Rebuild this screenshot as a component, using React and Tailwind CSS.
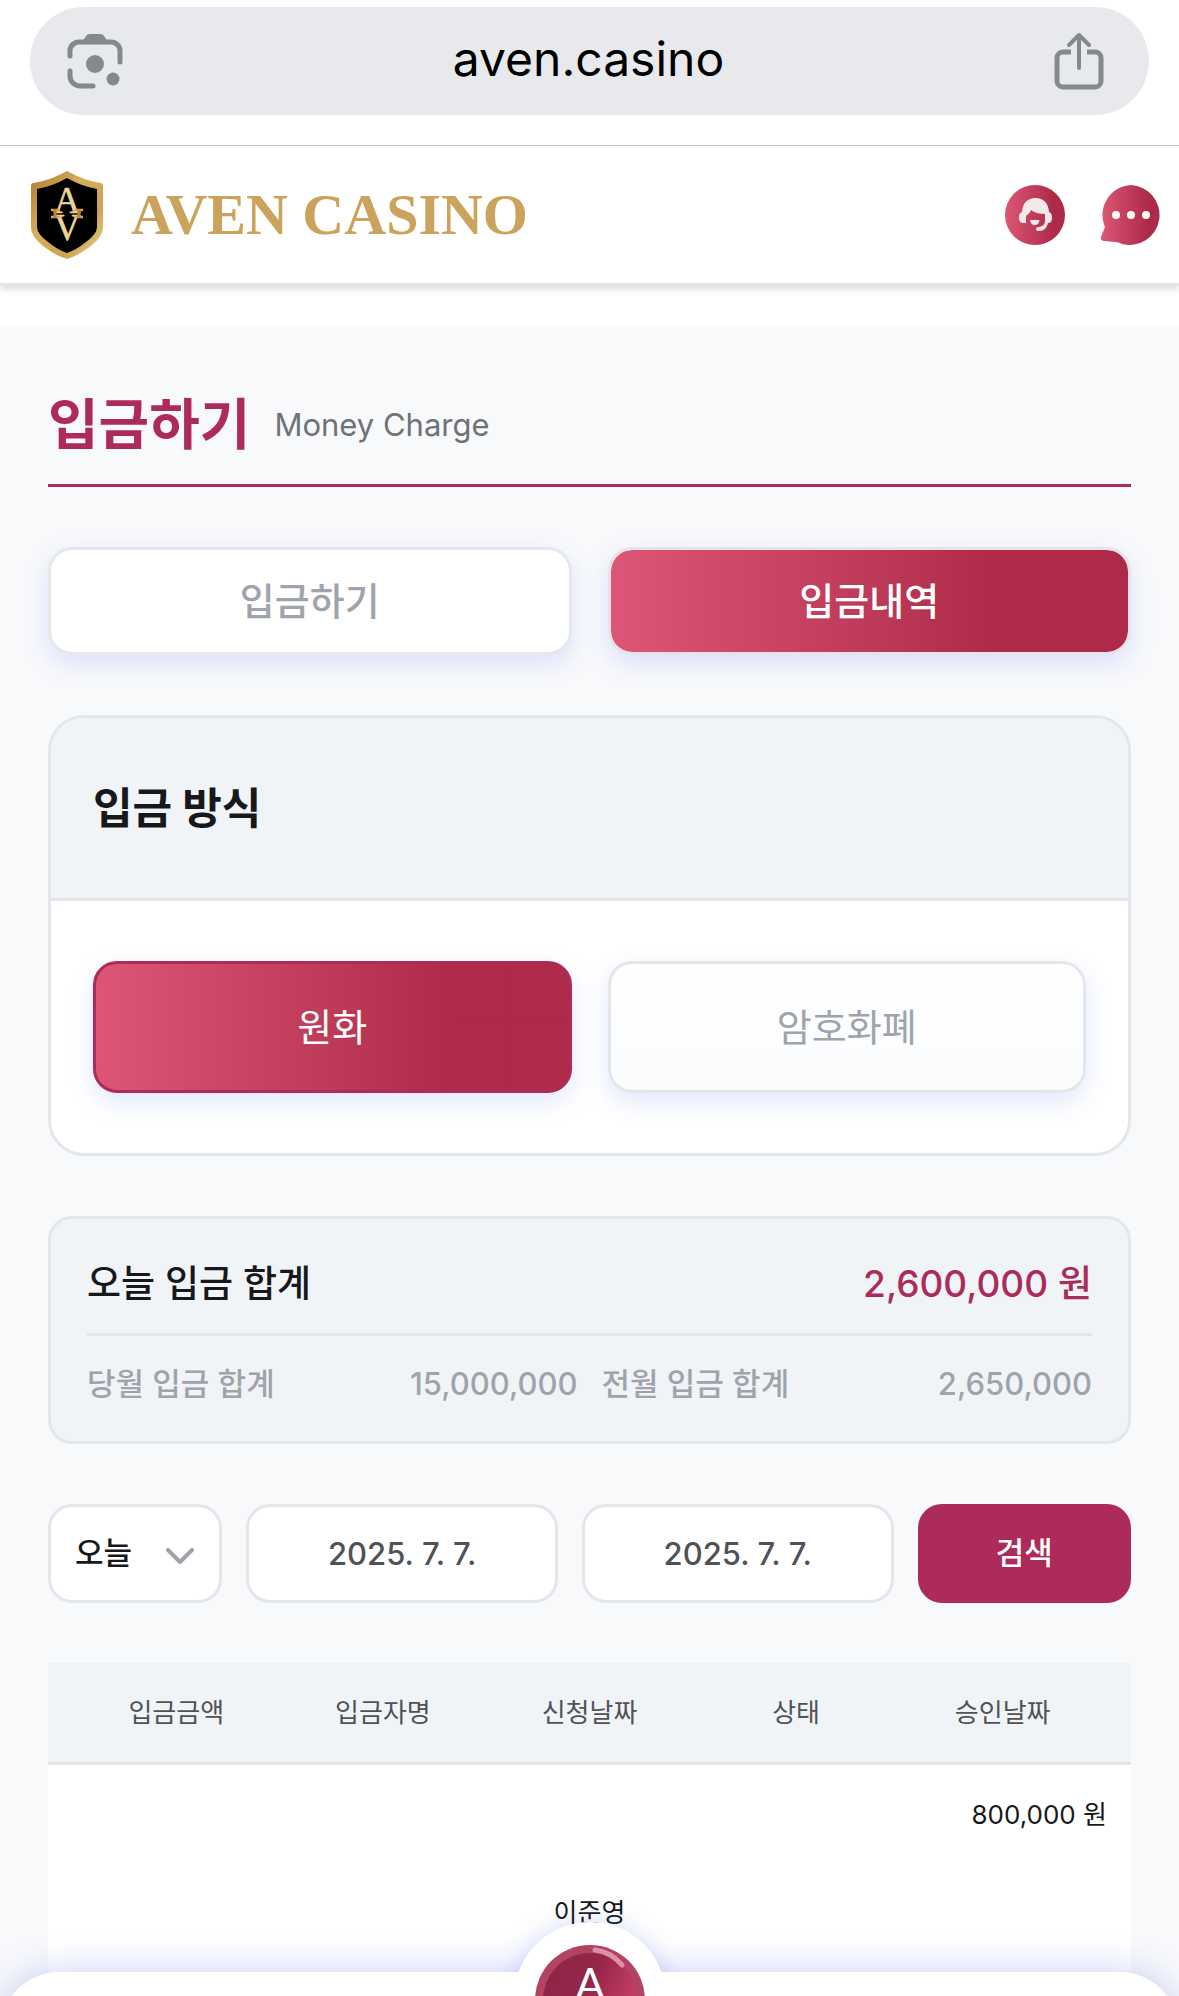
import { useState } from "react";

const SearchLensIcon = () => (
  <svg viewBox="0 0 56 56" className="w-14 h-14" fill="none" stroke="#85888c" strokeWidth="5" strokeLinecap="round">
    <path d="M3 23v-5a9 9 0 0 1 9-9h32a9 9 0 0 1 9 9v11" />
    <path d="M3 38v5a10 10 0 0 0 10 10h13" />
    <path d="M15 9l4-6q1-2 4-2h10q3 0 4 2l4 6z" fill="#85888c" stroke="none" />
    <circle cx="28" cy="31" r="9" fill="#85888c" stroke="none" />
    <circle cx="46" cy="46" r="6.5" fill="#85888c" stroke="none" />
  </svg>
);

const ShareIcon = () => (
  <svg viewBox="0 0 50 58" className="w-[50px] h-[58px]" fill="none" stroke="#85888c" strokeWidth="5" strokeLinecap="round" strokeLinejoin="round">
    <path d="M17 20H9a6 6 0 0 0-6 6v23a6 6 0 0 0 6 6h32a6 6 0 0 0 6-6V26a6 6 0 0 0-6-6h-8" strokeLinecap="butt" />
    <path d="M25 36V4M15 13L25 3l10 10" strokeWidth="4" />
  </svg>
);

const ShieldLogo = () => (
  <svg viewBox="0 0 74 90" className="w-[74px] h-[90px]">
    <defs>
      <linearGradient id="gold" x1="0" y1="0" x2="1" y2="1">
        <stop offset="0" stopColor="#b07a2c" />
        <stop offset="0.4" stopColor="#d5ae5e" />
        <stop offset="0.7" stopColor="#cda352" />
        <stop offset="1" stopColor="#ead78e" />
      </linearGradient>
    </defs>
    <path d="M37 1Q53 10 70 13q3 0 3 3v42Q73 66 61 76 48 86 37 89 26 86 13 76 1 66 1 58V16q0-3 3-3Q21 10 37 1z" fill="url(#gold)" />
    <path d="M37 8Q51 16 67 19v38q0 7-11 15-10 8-19 11-9-3-19-11Q7 64 7 57V19Q23 16 37 8z" fill="#000" />
    <g fill="#ead49a" stroke="#ead49a" strokeWidth="0.6" fontFamily="Liberation Serif, serif" fontSize="37" textAnchor="middle">
      <text x="37" y="43">A</text>
      <text x="37" y="70">V</text>
    </g>
    <path d="M21 40h9M21 47h9M44 40h9M44 47h9" stroke="#d9a95c" strokeWidth="2.5" />
    <path d="M25 39v9M49 39v9" stroke="#b9823c" strokeWidth="3" />
  </svg>
);

const SupportIcon = () => (
  <svg viewBox="0 0 60 60" className="w-15 h-15">
    <defs>
      <linearGradient id="rose" x1="0" x2="1">
        <stop offset="0" stopColor="#dd5676" />
        <stop offset="0.8" stopColor="#ad2b49" />
        <stop offset="1" stopColor="#ad2b49" />
      </linearGradient>
    </defs>
    <circle cx="30" cy="30" r="30" fill="url(#rose)" />
    <g fill="#f5e8ea">
      <path d="M17 28C17 18 23 13 30.5 13S44 18 44 28h-4v1q-9 0-14-4-2 5-6 6v-3z" />
      <path d="M21 27v11h-3q-4 0-4-5.500t4-5.500z" />
      <path d="M40 27h3q4 0 4 5.500T43 38q-2 8-9 8-3 0-3-2t3-2q6-1 6-6z" />
      <path d="M25 35h9.500q-.5 5-4.700 5T25 35z" />
    </g>
  </svg>
);

const ChatIcon = () => (
  <svg viewBox="0 0 60 60" className="w-15 h-15">
    <path d="M30 0a30 30 0 1 1-9 59q-3-2-7-2l-11-1q-4 0-3-4l4-10A30 30 0 0 1 30 0z" fill="url(#rose)" />
    <circle cx="15" cy="30" r="4" fill="#fff" />
    <circle cx="30" cy="30" r="4" fill="#fff" />
    <circle cx="45" cy="30" r="4" fill="#fff" />
  </svg>
);

const BrowserBar = () => (
  <div className="pt-[7px] pb-[30px] px-[30px] bg-white border-b border-[#c6c7ca]">
    <div className="h-[108px] rounded-full bg-[#e8e9ec] flex items-center justify-between pl-[37px] pr-[45px]">
      <button aria-label="이미지 검색"><SearchLensIcon /></button>
      <button className="text-[48px] leading-none text-black pb-1">aven.casino</button>
      <button aria-label="공유"><ShareIcon /></button>
    </div>
  </div>
);

const Header = () => (
  <header className="relative h-[140px] bg-white border-b-3 border-[#e3e4e7] shadow-[0_4px_6px_rgba(0,0,0,0.12)] flex items-center justify-between pl-[30px] pr-[18px]">
    <a href="#" className="flex items-center gap-[27px]">
      <ShieldLogo />
      <span className="font-['Liberation_Serif',serif] font-bold text-[58px] leading-none text-[#cca35c]">AVEN CASINO</span>
    </a>
    <div className="flex items-center gap-9">
      <button aria-label="고객센터"><SupportIcon /></button>
      <button aria-label="채팅"><ChatIcon /></button>
    </div>
  </header>
);

const roseGradient = "bg-linear-to-r from-[#dd5676] via-[#ad2b49] via-75% to-[#ad2b49] text-white";
const softShadow = "shadow-[0_9px_24px_rgba(75,110,240,0.16)]";

const Tabs = () => (
  <div className="grid grid-cols-2 gap-9">
    <button className={`h-[108px] rounded-3xl border-3 border-[#e4e8ec] bg-white text-[38px] font-medium text-[#9fa3ac] ${softShadow}`}>입금하기</button>
    <button className={`h-[108px] rounded-3xl border-3 border-[#e9e2ea] bg-clip-padding text-[38px] font-medium ${roseGradient} ${softShadow}`}>입금내역</button>
  </div>
);

const MethodCard = () => (
  <section className="rounded-[36px] border-3 border-[#e3e7ec] bg-white overflow-hidden">
    <h2 className="h-[183px] px-[42px] flex items-center bg-[#f1f4f7] border-b-3 border-[#e3e7ec] text-[43px] font-bold text-[#17181b]">입금 방식</h2>
    <div className="grid grid-cols-2 gap-9 px-[42px] py-[60px]">
      <button className={`h-[132px] rounded-3xl border-3 border-[#ac2b5a] bg-origin-border text-[38px] ${roseGradient} ${softShadow}`}>원화</button>
      <button className={`h-[132px] rounded-3xl border-3 border-[#e3e7ec] bg-linear-to-b from-white to-[#fafcfe] text-[38px] text-[#9fa3ac] ${softShadow}`}>암호화폐</button>
    </div>
  </section>
);

const Summary = () => (
  <section className="h-[228px] rounded-3xl border-3 border-[#e3e7ec] bg-[#f1f4f7] px-9">
    <div className="h-[117px] pt-4 flex items-center justify-between border-b-3 border-[#e3e7ec] text-[37px] font-medium">
      <span className="text-[#17181b]">오늘 입금 합계</span>
      <strong className="font-medium text-[#ac2b5a]">2,600,000 원</strong>
    </div>
    <div className="h-24 grid grid-cols-2 gap-6 text-[31px] font-medium text-[#9fa3ac]">
      <div className="flex items-center justify-between"><span>당월 입금 합계</span><span>15,000,000</span></div>
      <div className="flex items-center justify-between"><span>전월 입금 합계</span><span>2,650,000</span></div>
    </div>
  </section>
);

const Filters = () => {
  const [from, setFrom] = useState("2025. 7. 7.");
  const [to, setTo] = useState("2025. 7. 7.");
  const box = "w-full h-[99px] rounded-3xl border-3 border-[#e3e7ec] bg-white text-[31px] font-medium";

  return (
    <form className="grid grid-cols-[174fr_311fr_311fr_213fr] gap-6" onSubmit={(e) => e.preventDefault()}>
      <div className="relative">
        <select aria-label="기간" className={`${box} appearance-none pl-6 text-[#17181b]`}>
          <option>오늘</option>
        </select>
        <svg viewBox="0 0 28 16" className="absolute right-7 top-[44px] w-7 h-4 pointer-events-none" fill="none" stroke="#9fa3b0" strokeWidth="4" strokeLinecap="round" strokeLinejoin="round">
          <path d="M2 2l12 12L26 2" />
        </svg>
      </div>
      <input aria-label="시작일" className={`${box} text-center text-[#505256]`} value={from} onChange={(e) => setFrom(e.target.value)} />
      <input aria-label="종료일" className={`${box} text-center text-[#505256]`} value={to} onChange={(e) => setTo(e.target.value)} />
      <button className="h-[99px] rounded-3xl bg-[#ac2b5a] text-[31px] font-medium text-white">검색</button>
    </form>
  );
};

const columns = ["입금금액", "입금자명", "신청날짜", "상태", "승인날짜"];

const History = () => (
  <table className="block w-full bg-white text-[26px] text-[#17181b]">
    <thead className="block bg-[#f1f4f7] border-b-3 border-[#e3e7ec] px-[25px]">
      <tr className="grid grid-cols-5 h-[99px] items-center">
        {columns.map((name) => (
          <th key={name} className="font-normal text-[#505256]">{name}</th>
        ))}
      </tr>
    </thead>
    <tbody className="block px-6">
      <tr className="flex flex-col">
        <td className="h-[98px] flex items-center justify-end">800,000 원</td>
        <td className="h-[98px] flex items-center justify-center">이준영</td>
        <td className="h-[98px]"></td>
      </tr>
    </tbody>
  </table>
);

const BottomNav = () => (
  <nav className="absolute inset-x-0 top-[calc(100%-24px)] h-[200px]">
    <div className="absolute inset-0 rounded-t-[60px] bg-white shadow-[0_0_36px_rgba(75,100,230,0.3)]" />
    <div className="absolute left-1/2 -translate-x-1/2 -top-[50px] w-[152px] h-[152px] rounded-full shadow-[0_0_24px_rgba(75,100,230,0.25)]" />
    <div className="absolute inset-0 rounded-t-[60px] bg-white" />
    <button aria-label="홈" className="absolute left-1/2 -translate-x-1/2 -top-[50px] w-[152px] h-[152px] rounded-full bg-white flex items-center justify-center pt-1">
      <svg viewBox="0 0 110 110" className="w-[110px] h-[110px]">
        <defs>
          <linearGradient id="coin" x1="0" x2="1" y2="0.4">
            <stop offset="0" stopColor="#8a2545" />
            <stop offset="0.55" stopColor="#96264a" />
            <stop offset="1" stopColor="#c23f62" />
          </linearGradient>
        </defs>
        <circle cx="55" cy="55" r="55" fill="#b34263" />
        <circle cx="55" cy="55" r="47" fill="url(#coin)" />
        <path d="M60 5q16 2 27 15" fill="none" stroke="#dd90a6" strokeWidth="5" strokeLinecap="round" />
        <text x="55" y="54" textAnchor="middle" fontFamily="Lato, sans-serif" fontSize="43" fill="#fff">A</text>
      </svg>
    </button>
  </nav>
);

export default function App() {
  return (
    <div className="relative h-screen overflow-hidden bg-[#f8f9fb] font-['Inter','Noto_Sans_CJK_KR',sans-serif]">
      <div className="bg-white pb-10">
        <BrowserBar />
        <Header />
      </div>
      <main className="flex flex-col gap-15 px-12 pt-[62px]">
        <h1 className="flex items-center gap-6 h-[99px] pb-6 border-b-3 border-[#ac2b5a]">
          <span className="text-[55px] leading-none font-bold text-[#ac2b5a]">입금하기</span>
          <span className="text-[31px] leading-none text-[#707276]">Money Charge</span>
        </h1>
        <Tabs />
        <MethodCard />
        <Summary />
        <Filters />
        <History />
      </main>
      <BottomNav />
    </div>
  );
}
